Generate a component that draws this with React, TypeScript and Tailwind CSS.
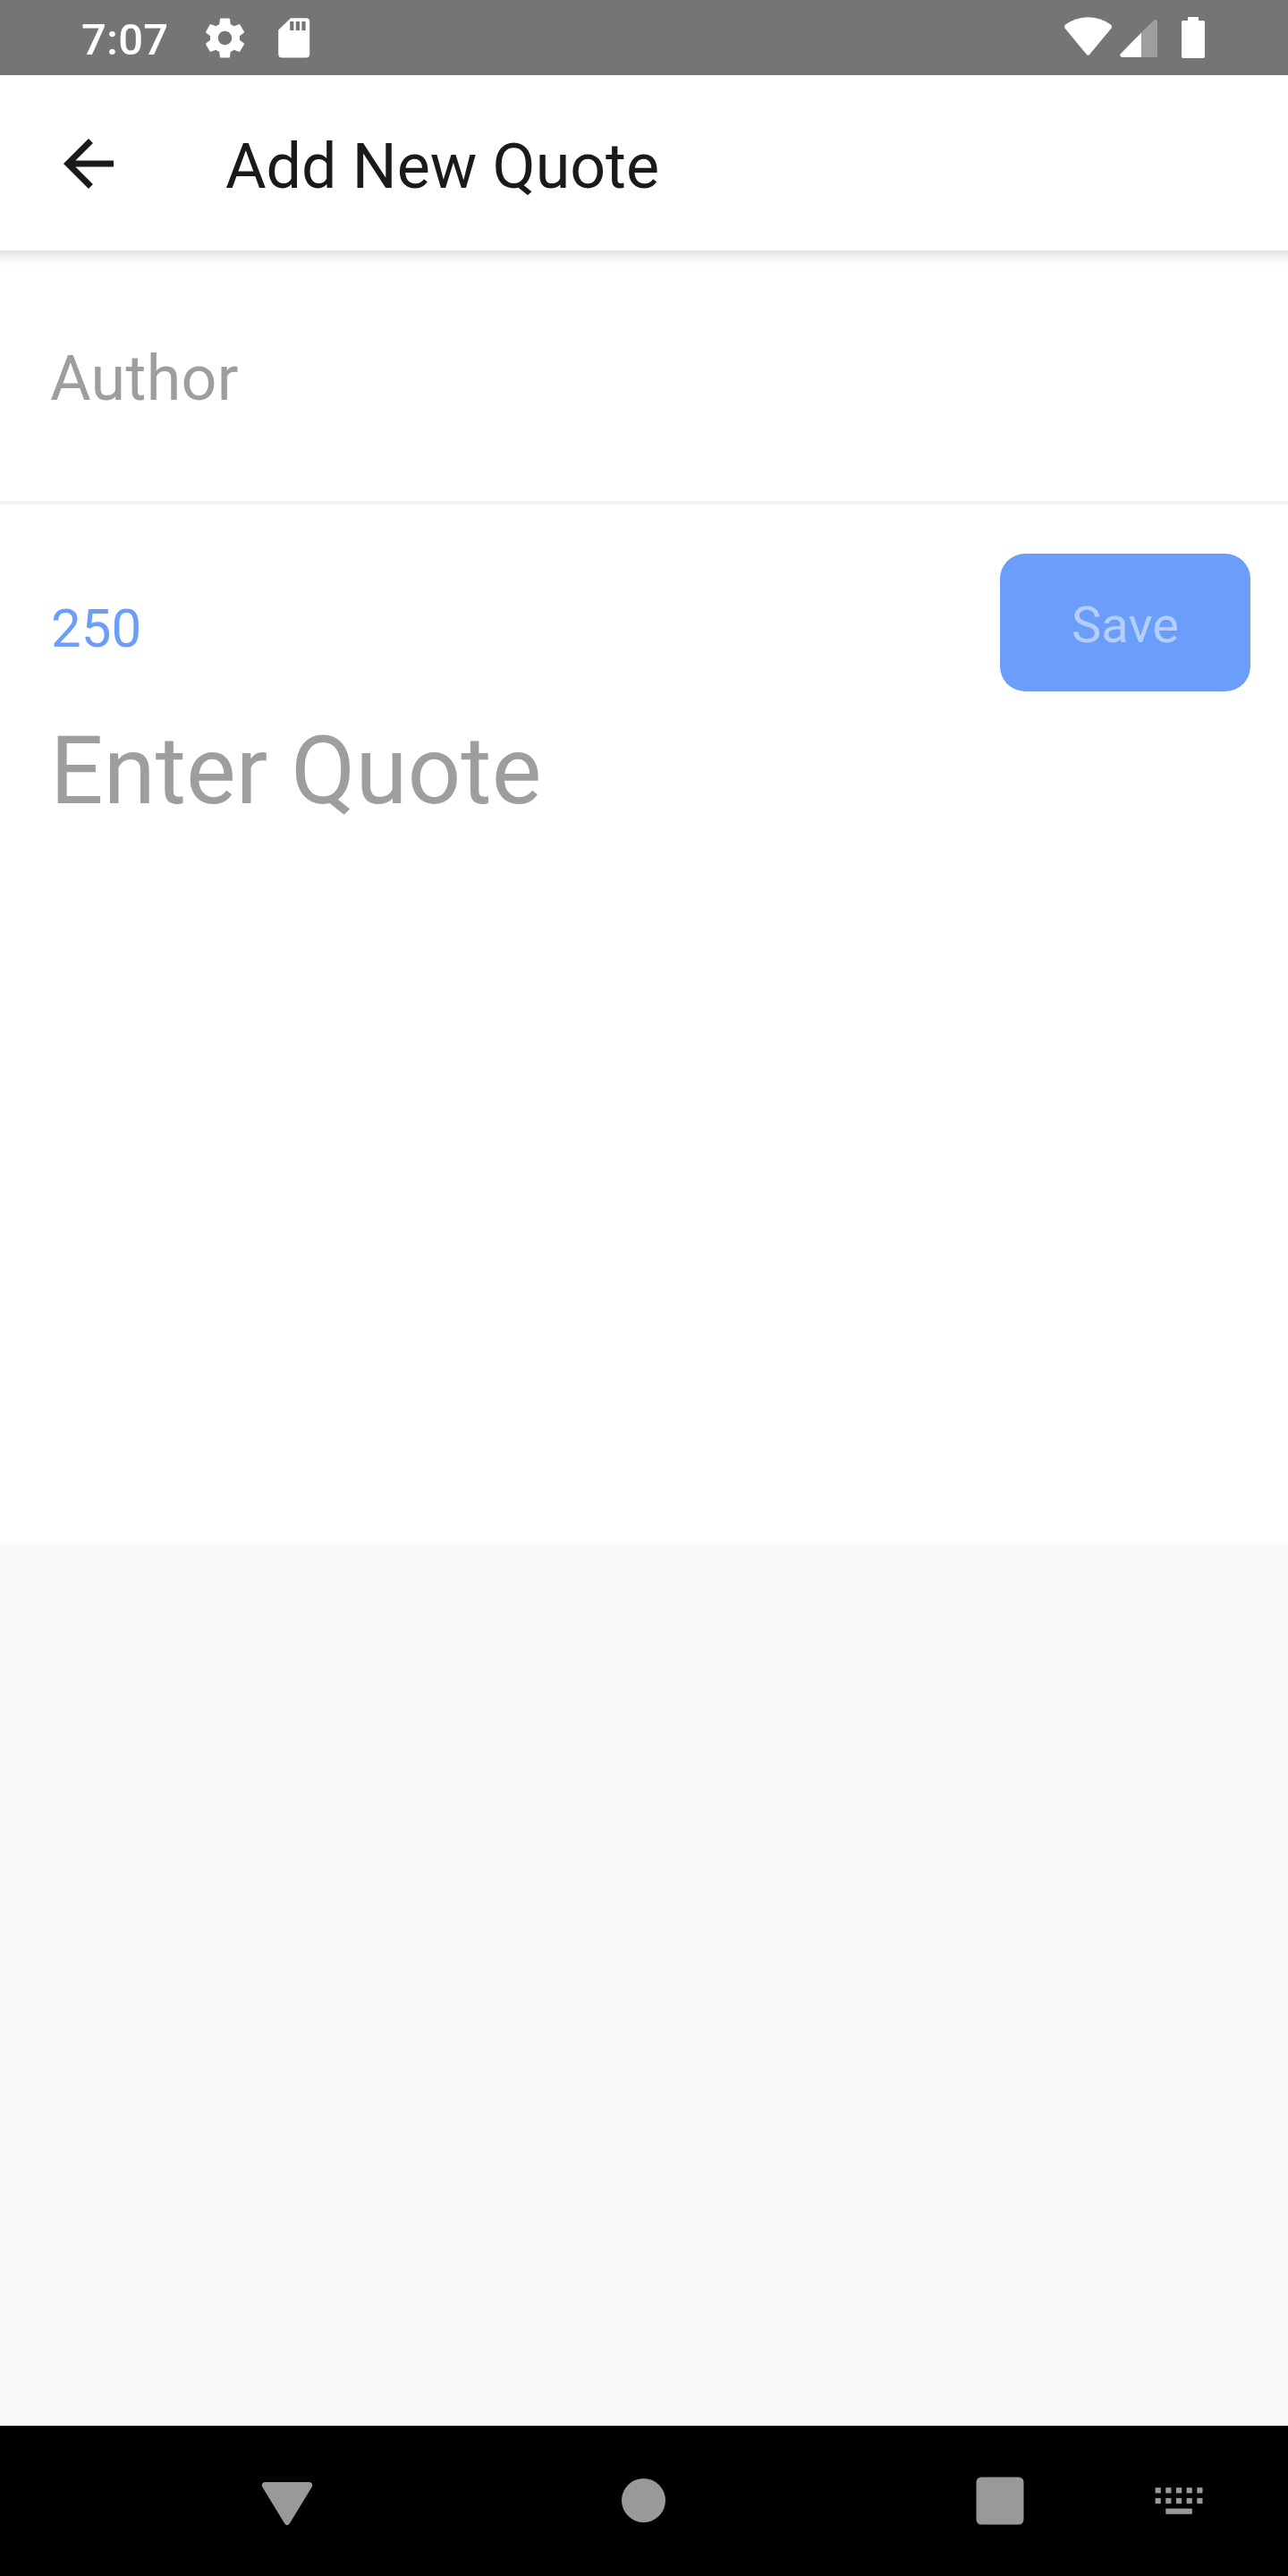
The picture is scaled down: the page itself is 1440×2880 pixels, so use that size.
import React from "react";

function StatusBar() {
  return (
    <header className="relative z-20 flex h-[84px] shrink-0 items-center bg-[#757575] pl-[91px] text-white">
      <span className="w-[134px] pt-[5px] text-[49px] font-medium leading-[84px] tracking-[0.2px]">7:07</span>
      <svg className="h-[53px] w-[53px]" viewBox="0 0 24 24" fill="currentColor">
        <path d="M19.43 12.98c.04-.32.07-.64.07-.98s-.03-.66-.07-.98l2.11-1.65c.19-.15.24-.42.12-.64l-2-3.46c-.12-.22-.39-.3-.61-.22l-2.49 1c-.52-.4-1.08-.73-1.69-.98l-.38-2.65C14.46 2.18 14.25 2 14 2h-4c-.25 0-.46.18-.49.42l-.38 2.65c-.61.25-1.17.59-1.69.98l-2.49-1c-.23-.09-.49 0-.61.22l-2 3.46c-.13.22-.07.49.12.64l2.11 1.65c-.04.32-.07.65-.07.98s.03.66.07.98l-2.11 1.65c-.19.15-.24.42-.12.64l2 3.46c.12.22.39.3.61.22l2.49-1c.52.4 1.08.73 1.69.98l.38 2.65c.03.24.24.42.49.42h4c.25 0 .46-.18.49-.42l.38-2.65c.61-.25 1.17-.59 1.69-.98l2.49 1c.23.09.49 0 .61-.22l2-3.46c.12-.22.07-.49-.12-.64l-2.11-1.65zM12 15.5c-1.93 0-3.5-1.57-3.5-3.5s1.57-3.5 3.5-3.5 3.5 1.57 3.5 3.5-1.57 3.5-3.5 3.5z" />
      </svg>
      <svg className="ml-[33px] h-[44px] w-[35px] overflow-visible" viewBox="0 0 35 44" fill="currentColor">
        <path fillRule="evenodd" d="M14 0.200H31.200a4 4 0 0 1 4 4V40.400a4 4 0 0 1-4 4H4.200a4 4 0 0 1-4-4V13.500zM13.200 4v10h4.200V4zM19.800 4v10h4.200V4zM26.400 4v10h4.200V4z" />
      </svg>
      <svg className="ml-auto mr-[92px] h-[84px] w-[160px]" viewBox="1188 0 160 84" fill="currentColor">
        <path d="M1191 27.500C1208 16.600 1225 16.600 1242 27.500Q1244 29.300 1242.500 31.500L1218.500 60.600Q1216.500 63 1214.500 60.600L1190.500 31.500Q1189 29.300 1191 27.500Z" />
        <path d="M1276 36.500V64H1254.500Q1251.500 63.500 1252.500 60.500Z" />
        <path fillOpacity=".3" d="M1276 36.500V64H1292Q1294 64 1294 62V24Q1293.500 21 1290.500 22.300Z" />
        <path d="M1328 19h12v4h5a2 2 0 0 1 2 2v38a2 2 0 0 1-2 2h-22a2 2 0 0 1-2-2V25a2 2 0 0 1 2-2h5z" />
      </svg>
    </header>
  );
}

function AppBar() {
  return (
    <div className="relative z-10 flex h-[196px] shrink-0 items-center bg-white pl-[57px] text-[#1a1a1a] shadow-[0_-4px_14px_8px_rgba(0,0,0,0.17)]">
      <button className="mt-[2px]" aria-label="Back">
        <svg className="h-[84px] w-[84px]" viewBox="0 0 24 24" fill="currentColor">
          <path d="M20 11H7.830l5.590-5.590L12 4l-8 8 8 8 1.410-1.410L7.830 13H20v-2z" />
        </svg>
      </button>
      <h1 className="ml-[111px] pt-[8px] text-[70px] leading-[82px] tracking-[-0.05px]">Add New Quote</h1>
    </div>
  );
}

function NavBar() {
  return (
    <nav className="h-[168px] shrink-0 bg-black text-[#999999]">
      <svg className="h-[168px] w-full" viewBox="0 0 1440 168" fill="currentColor">
        <path d="M296 63H346Q350 64 349 68L324 109Q321 113.500 318 109L293 68Q292 64 296 63Z" />
        <circle cx="719.500" cy="83.500" r="24.500" />
        <rect x="1091.500" y="57.500" width="53" height="53" rx="5.500" />
        {[0, 1].map((row) =>
          [0, 1, 2, 3, 4].map((col) => (
            <rect key={`${row}-${col}`} x={1291.600 + col * 11.670} y={69.200 + row * 11.670} width="6.200" height="6.200" />
          ))
        )}
        <rect x="1303.300" y="92.600" width="29.500" height="6.200" />
      </svg>
    </nav>
  );
}

export default function App() {
  return (
    <div className="flex h-[2880px] w-[1440px] flex-col overflow-hidden bg-[#fafafa] font-[Roboto,sans-serif]">
      <StatusBar />
      <AppBar />
      <main className="flex h-[1445px] flex-col bg-white">
        <div className="flex h-[284px] items-center border-b-4 border-[#f2f2f2] px-[56px] pt-[6px] text-[70px] leading-[82px] tracking-[0.3px] text-[#9e9e9e]">
          Author
        </div>
        <div className="mt-[55px] flex h-[154px] items-center justify-between pl-[57px] pr-[42px]">
          <span className="pt-[14px] text-[60px] leading-[70px] text-[#6b9efa]">250</span>
          <button className="h-[154px] w-[280px] rounded-[28px] bg-[#6b9efa] pt-[6px] text-[56px] leading-[66px] text-[#b5cffd]">
            Save
          </button>
        </div>
        <div className="mt-[28px] px-[56px] text-[105px] leading-[124px] text-[#9e9e9e]">Enter Quote</div>
      </main>
      <div className="grow" />
      <NavBar />
    </div>
  );
}
